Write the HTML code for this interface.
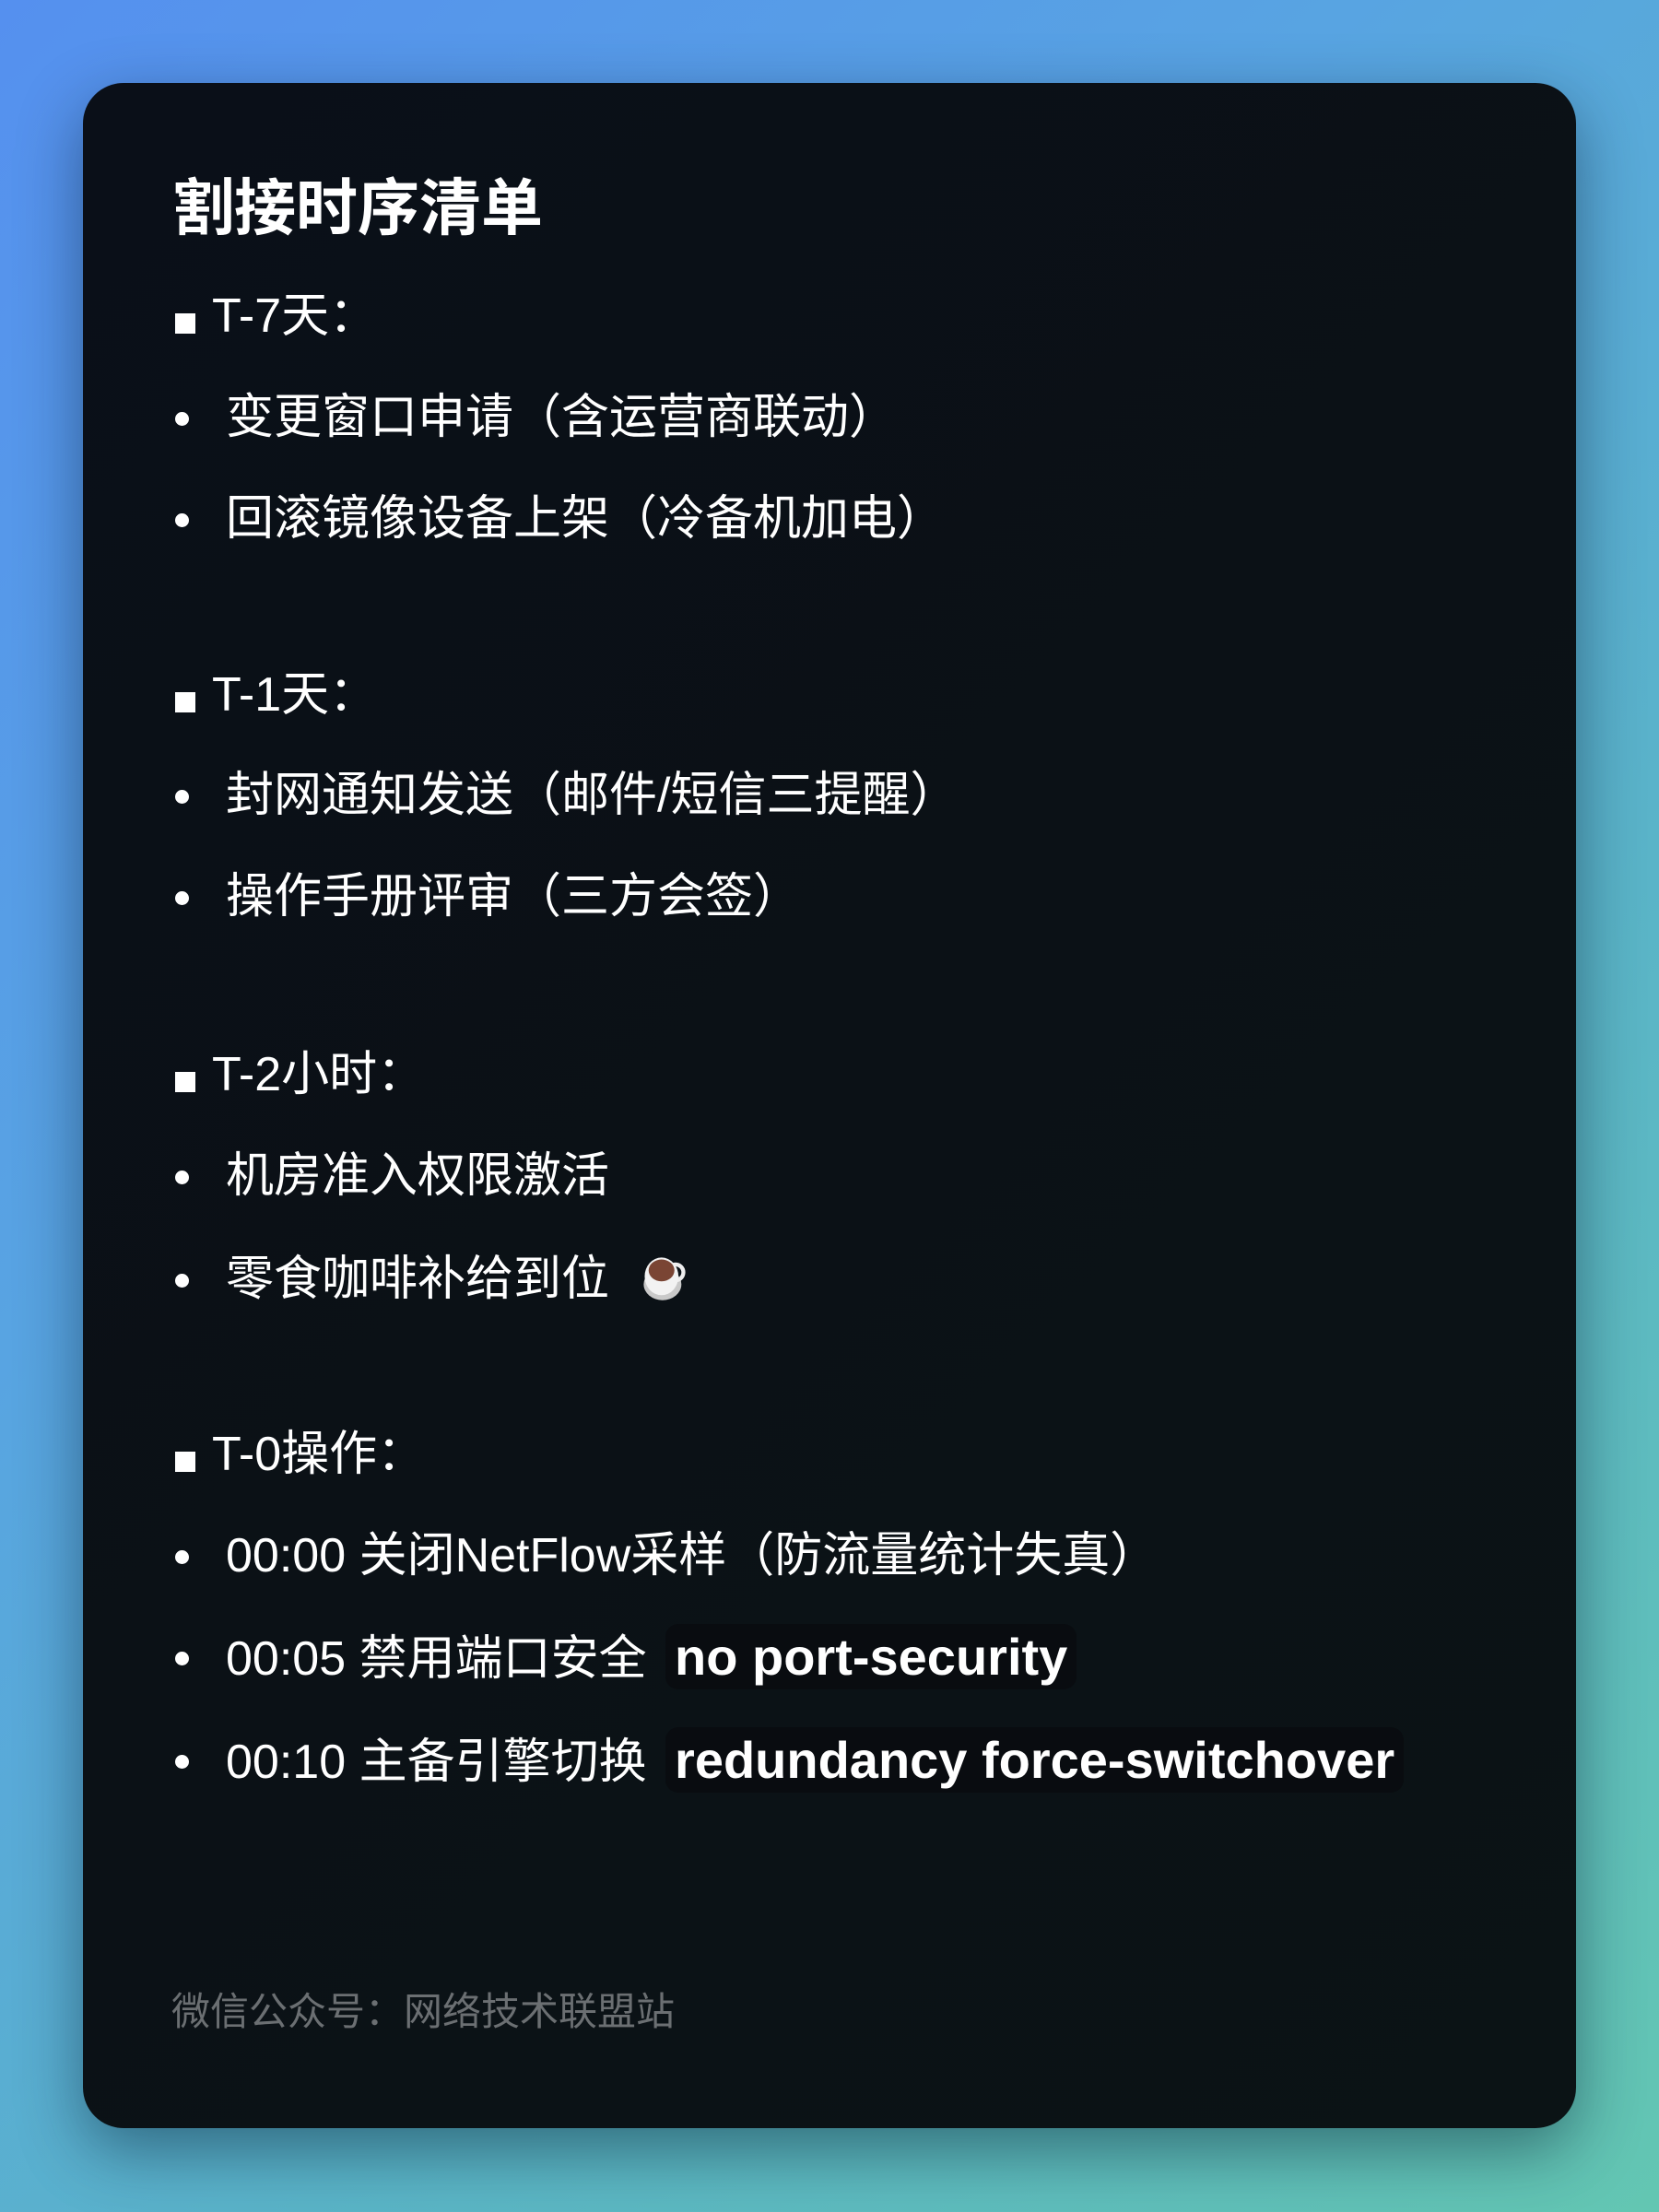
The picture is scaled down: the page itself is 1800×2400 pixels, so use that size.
<!DOCTYPE html>
<html><head><meta charset="utf-8"><style>
html,body{margin:0;padding:0;}
body{width:1800px;height:2400px;position:relative;overflow:hidden;
background:linear-gradient(135deg,#5590ef 0%,#58a4e2 35%,#5ab4c8 65%,#63c6b2 100%);
font-family:"Liberation Sans","Noto Sans CJK SC",sans-serif;}
.card{position:absolute;left:90px;top:90px;width:1620px;height:2219px;border-radius:44px;
background:linear-gradient(135deg,#0a0f18 0%,#0b1116 50%,#0b1315 100%);
box-shadow:0 24px 70px rgba(0,20,40,0.45);}
.l{position:absolute;left:0;color:#fff;font-size:52px;line-height:60px;white-space:nowrap;}
.h{left:100px;}
.h .sq{display:inline-block;width:22px;height:22px;background:#fff;margin-right:18px;vertical-align:-2px;}
.b{left:155px;}
.b::before{content:"";position:absolute;left:-55px;top:24px;width:15px;height:15px;border-radius:50%;background:#fff;}
.title{position:absolute;left:97px;top:97px;color:#fff;font-size:67px;font-weight:bold;line-height:80px;}
code{font-family:"Liberation Sans",sans-serif;font-weight:bold;font-size:56px;background:#090c10;border-radius:14px;padding:4px 10px;margin-left:6px;}
.foot{position:absolute;left:96px;top:2068px;color:#6b6f72;font-size:42px;line-height:50px;}
</style></head><body>
<div class="card">
<div class="title">割接时序清单</div>
<div class="l h" style="top:223px"><span class="sq"></span>T-7天：</div>
<div class="l b" style="top:333px">变更窗口申请（含运营商联动）</div>
<div class="l b" style="top:443px">回滚镜像设备上架（冷备机加电）</div>
<div class="l h" style="top:634px"><span class="sq"></span>T-1天：</div>
<div class="l b" style="top:743px">封网通知发送（邮件/短信三提醒）</div>
<div class="l b" style="top:853px">操作手册评审（三方会签）</div>
<div class="l h" style="top:1046px"><span class="sq"></span>T-2小时：</div>
<div class="l b" style="top:1156px">机房准入权限激活</div>
<div class="l b" style="top:1268px">零食咖啡补给到位 <svg width="56" height="56" viewBox="0 0 52 52" style="vertical-align:-10px;margin-left:18px"><ellipse cx="24" cy="32" rx="19" ry="16" fill="#c9c9c9"/><circle cx="37" cy="20" r="8" fill="none" stroke="#eee" stroke-width="4"/><ellipse cx="23" cy="24" rx="17" ry="19" fill="#f2f2f2"/><ellipse cx="23" cy="18" rx="13" ry="11" fill="#7a4534"/></svg></div>
<div class="l h" style="top:1458px"><span class="sq"></span>T-0操作：</div>
<div class="l b" style="top:1568px">00:00 关闭NetFlow采样（防流量统计失真）</div>
<div class="l b" style="top:1678px">00:05 禁用端口安全 <code>no port-security</code></div>
<div class="l b" style="top:1790px">00:10 主备引擎切换 <code>redundancy force-switchover</code></div>
<div class="foot">微信公众号：网络技术联盟站</div>
</div>
</body></html>
